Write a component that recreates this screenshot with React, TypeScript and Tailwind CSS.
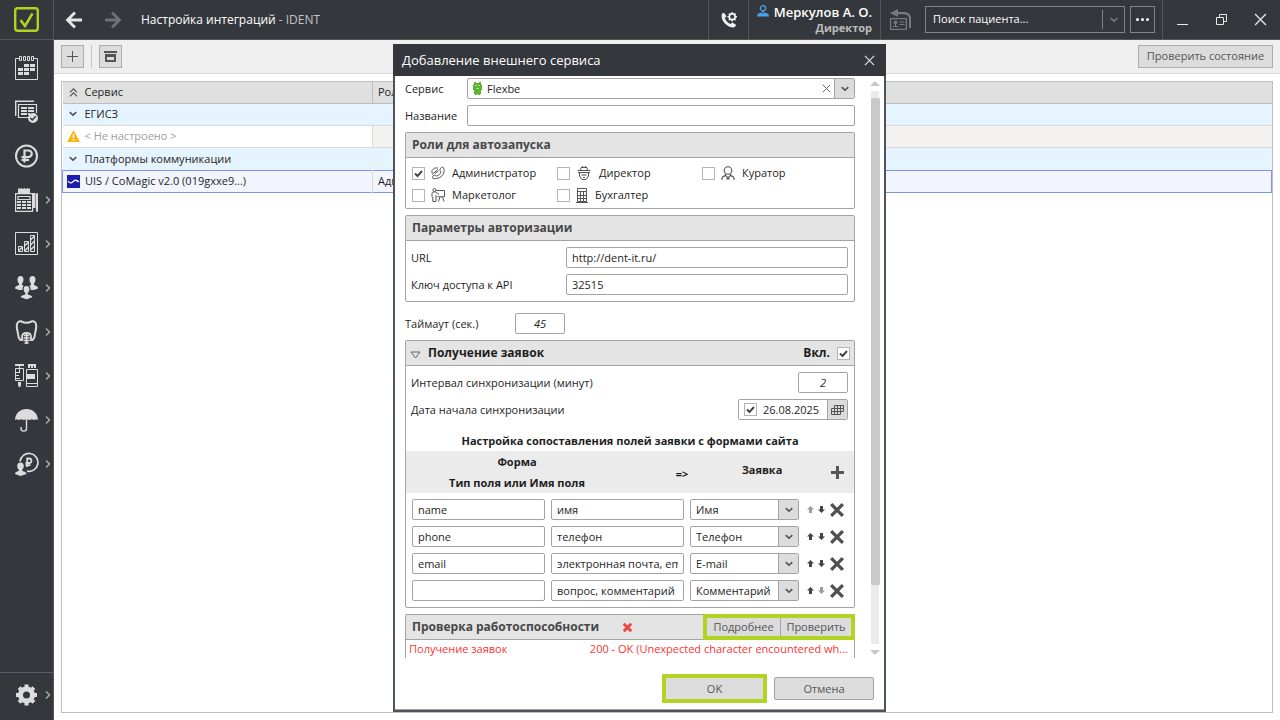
import type { ReactNode } from "react";

type IconProps = { children: ReactNode };

function SideIcon({ children }: IconProps) {
  return (
    <svg viewBox="0 0 24 24" className="size-6 shrink-0" fill="none" stroke="#dcdcdc" strokeWidth="1.2" aria-hidden="true">
      {children}
    </svg>
  );
}

const SIDE_ITEMS: { label: string; more?: boolean; icon: ReactNode }[] = [
  {
    label: "Расписание",
    icon: (
      <SideIcon>
        <path d="M4 2.5H.5v21h22v-21H19" strokeWidth="1" />
        <path d="M4.500.5h2v4h-2zM8.500.5h2v4h-2zM12.500.5h2v4h-2zM16.500.5h2v4h-2z" strokeWidth="1" />
        <path fill="#dcdcdc" stroke="none" d="M9 8h5v3H9zM15 8h5v3h-5zM3 12h5v3H3zM9 12h5v3H9zM15 12h5v3h-5zM3 16h5v3H3zM9 16h5v3H9z" />
      </SideIcon>
    ),
  },
  {
    label: "Задачи",
    icon: (
      <SideIcon>
        <path d="M.7 16V1.200H19" strokeWidth="1.400" />
        <path d="M14 17.500H3.500v-13h18V13" />
        <path d="M6 8h6M13 8h6M6 11h6M13 11h6M6 14h6M13 14h2" strokeWidth="1.800" />
        <circle cx="18" cy="18" r="5" fill="#dcdcdc" stroke="none" />
        <path d="m15.300 18 2 2 3.500-3.800" stroke="#34373c" strokeWidth="1.500" />
      </SideIcon>
    ),
  },
  {
    label: "Платежи",
    icon: (
      <SideIcon>
        <circle cx="11.500" cy="12" r="10.500" strokeWidth="2" />
        <path d="M9.500 18.500v-12h4a3.200 3.200 0 0 1 0 6.500H6.500M6.500 15.800h7.500" strokeWidth="2.200" />
      </SideIcon>
    ),
  },
  {
    label: "Касса",
    more: true,
    icon: (
      <SideIcon>
        <path fill="#dcdcdc" stroke="none" d="M3 5V1l1-1 1 1 1.500-1L8 1l1.500-1 1.500 1 1.500-1L14 1l1-1v5z" />
        <path d="M.6 5.600h17v17.800H.6z" />
        <path d="M3 8.500h12v3H3z" />
        <path fill="#dcdcdc" stroke="none" d="M2 13h4v2H2zM7 13h4v2H7zM12 13h4v2h-4zM2 16h4v2H2zM7 16h4v2H7zM12 16h4v2h-4zM2 19h4v2H2zM7 19h4v2H7zM12 19h4v2h-4zM18 5h2.500v15H18z" />
        <path d="M21.500 5.500h1v17.900h-1z" strokeWidth="1" />
      </SideIcon>
    ),
  },
  {
    label: "Отчёты",
    more: true,
    icon: (
      <SideIcon>
        <path d="M.5.5h22v22H.5z" strokeWidth="1" />
        <path d="M3.500 14.500h4v5h-4zM9.500 9.500h4v10h-4zM15.500 3.500h4v16h-4z" strokeWidth="1" />
        <path d="m3.500 19 4-4M9.500 14l4-4M9.500 19l4-4M15.500 8l4-4M15.500 13l4-4M15.500 18l4-4" strokeWidth="1.500" />
      </SideIcon>
    ),
  },
  {
    label: "Пациенты",
    more: true,
    icon: (
      <SideIcon>
        <g fill="#dcdcdc" stroke="none">
          <path d="M5.500 0c2 0 3 1.500 3 3.500s-1 3.500-1.500 4.100V9l3.500 1.500L7.500 14H4L0 12.500C0 10.500 1 10 4 9V7.600C3.300 7 2.500 5.500 2.500 3.500S3.500 0 5.500 0z" />
          <path d="M17.500 0c2 0 3 1.500 3 3.500s-1 3.500-1.500 4.100V9c3 1 4 1.500 4 3.500L19 14h-3.500l-3-3.500L16 9V7.600c-.7-.6-1.500-2.100-1.500-4.100s1-3.500 3-3.500z" />
          <path stroke="#34373c" d="M11.500 9.500c2.200 0 3.500 1.600 3.500 3.700s-1 3.300-1.700 4V18c3.500 1 4.700 1.800 4.700 3.500L11.500 24 5 21.500c0-1.700 1.200-2.500 4.700-3.500v-.8c-.7-.7-1.700-1.900-1.700-4s1.300-3.700 3.500-3.700z" />
        </g>
      </SideIcon>
    ),
  },
  {
    label: "Лечение",
    more: true,
    icon: (
      <SideIcon>
        <path d="M8 19.500c-2 1.500-4.500 0-4.800-4.500-.3-3-1.700-6-1.400-9.500C2 2 4 .8 6.500 1.500c3 1.600 7 1.600 10 0 2.500-.7 4.500.5 4.700 4 .3 3.500-1.100 6.500-1.400 9.500-.3 4.500-2.800 6-4.800 4.500" strokeWidth="2" />
        <path d="M7 19.500V17c0-2.500 2-4 4.500-4s4.500 1.500 4.500 4v2.500" strokeWidth="1.800" />
        <path d="M11.500 13v11M9 15.500h5M8.500 18h6M8.500 20.500h6M9.500 23h4" strokeWidth="1.600" />
      </SideIcon>
    ),
  },
  {
    label: "Склад",
    more: true,
    icon: (
      <SideIcon>
        <path d="M0 1h9" strokeWidth="2" />
        <path d="M4.500 1v7M.5 4.500h8v12h-8zM1 8.500h4M1 11.500h3M1 14.500h4" strokeWidth="1" />
        <path fill="#dcdcdc" stroke="none" d="M3 18h3v3.500h-.5V23h-2v-1.500H3zM13 0h8v4h-2V2h-1v2h-2V2h-1v2h-2zM12 10h8v5h-8z" />
        <path d="M11.500 5.500h11v17h-11zM12 19.500h10" strokeWidth="1" />
      </SideIcon>
    ),
  },
  {
    label: "Страховые",
    more: true,
    icon: (
      <SideIcon>
        <path fill="#dcdcdc" stroke="none" d="M0 12C.5 5 5 1 11.500 1S22.500 5 23 12l-2-.8-2 .9-2-.9-2.700.9-2.800-.9-2.800.9-2.700-.9-2 .9-2-.9z" />
        <path d="M11.500 11v9.500c0 3.500-5.500 3.500-5.500 0V19" strokeWidth="1.400" />
      </SideIcon>
    ),
  },
  {
    label: "Зарплата",
    more: true,
    icon: (
      <SideIcon>
        <path d="M5 9.500a9 9 0 1 1 7 9.700" strokeWidth="1.700" />
        <path d="M12.200 15V6.500h2.500a2.300 2.300 0 0 1 0 4.500h-4.200M10.500 13.200h5" strokeWidth="1.800" />
        <path fill="#dcdcdc" stroke="none" d="M5.500 10.500c2.200 0 3.300 1.500 3.300 3.500S7.900 17 7.200 17.800v1.200c3 .8 4.300 1.300 4.300 3L5.500 24 0 22c0-1.700 1-2.200 3.800-3v-1.200C3.100 17 2.200 16 2.200 14s1.100-3.500 3.300-3.500z" />
      </SideIcon>
    ),
  },
];

function SideButton({ label, more, children }: { label: string; more?: boolean; children: ReactNode }) {
  return (
    <button type="button" aria-label={label} className="flex h-11 w-full items-center gap-[6px] pl-[15px]">
      {children}
      {more && (
        <svg viewBox="0 0 6 8" className="h-2 w-[6px]" fill="none" stroke="#a8aaad" strokeWidth="1.500" aria-hidden="true">
          <path d="m1 .5 3.500 3.500L1 7.500" />
        </svg>
      )}
    </button>
  );
}

function Cross({ className, width }: { className: string; width: number }) {
  return (
    <svg viewBox="0 0 12 12" className={className} fill="none" stroke="currentColor" strokeWidth={width} aria-hidden="true">
      <path d="m1 1 10 10M11 1 1 11" />
    </svg>
  );
}

function ChevronDown({ className }: { className?: string }) {
  return (
    <svg viewBox="0 0 8 6" className={`h-[6px] w-2 ${className ?? ""}`} fill="none" stroke="currentColor" strokeWidth="1.600" aria-hidden="true">
      <path d="m.7 1.200 3.300 3 3.300-3" />
    </svg>
  );
}

function Check({ id, checked, label }: { id: string; checked?: boolean; label?: string }) {
  return (
    <span className="grid size-[13px] shrink-0">
      <input
        id={id}
        type="checkbox"
        defaultChecked={checked}
        aria-label={label}
        className="peer col-start-1 row-start-1 size-[13px] appearance-none border border-[#b4b4b4] bg-white"
      />
      <svg viewBox="0 0 13 13" className="pointer-events-none invisible col-start-1 row-start-1 size-[13px] peer-checked:visible" fill="none" stroke="#444" strokeWidth="1.900" aria-hidden="true">
        <path d="m3 6.500 2.500 2.500L10 4" />
      </svg>
    </span>
  );
}

const FIELD = "h-[21px] rounded-[2px] border border-[#a3a3a3] bg-white px-[5px] text-[11px] text-[#1e1e1e]";

function Select({ label, value, options }: { label: string; value: string; options: string[] }) {
  return (
    <span className="grid h-[21px] w-[109px] grid-cols-[1fr_20px] overflow-hidden rounded-[2px] border border-[#a3a3a3] bg-white">
      <select aria-label={label} defaultValue={value} className="col-span-2 col-start-1 row-start-1 appearance-none pl-[5px] text-[11px] leading-[19px]">
        {options.map((o) => (
          <option key={o}>{o}</option>
        ))}
      </select>
      <span className="pointer-events-none col-start-2 row-start-1 flex items-center justify-center border-l border-[#a3a3a3] bg-[#dcdcdc] text-[#555]">
        <ChevronDown />
      </span>
    </span>
  );
}

function Panel({ header, children, open }: { header: ReactNode; children: ReactNode; open?: boolean }) {
  return (
    <section className={open ? "rounded-t-[2px] border border-b-0 border-[#a3a3a3]" : "rounded-[2px] border border-[#a3a3a3]"}>
      <header className="flex h-[25px] items-center border-b border-[#a3a3a3] bg-[#e4e4e4] px-[6px] text-xs font-bold text-[#484848]">
        {header}
      </header>
      {children}
    </section>
  );
}

const ROLES: { id: string; name: string; checked?: boolean; icon: ReactNode }[] = [
  {
    id: "admin",
    name: "Администратор",
    checked: true,
    icon: (
      <svg viewBox="0 0 14 14" className="size-[14px]" fill="none" stroke="#555" strokeWidth="1" aria-hidden="true">
        <path d="M9 3.500C9.500 1.500 11 .7 12.300 1.500c1.500 2.500 1 6-1.300 8.300-2.500 2.500-6 3.500-9 2.700-1-1-.5-2.500 1-3.200 1-.4 2 .6 2.600.8 2-.4 4-2.400 4.300-4.200C9.800 5.300 8.800 4.500 9 3.500z" />
        <path d="M1 7V4.500L3.500 2H7M1 8.500 7 3.500M4 7.500 7.500 5" />
      </svg>
    ),
  },
  {
    id: "director",
    name: "Директор",
    icon: (
      <svg viewBox="0 0 16 15" className="h-[15px] w-4" fill="none" stroke="#555" strokeWidth="1" aria-hidden="true">
        <path d="M4.500 4.500 5 1.500h6l.5 3M1.500 4.500h13M2 6.500h12M3.500 6.500V10L6 13.500h4l2.500-3.500V6.500M5.500 9h5M7 11.500h2M6 .500h1M9 .500h1" />
      </svg>
    ),
  },
  {
    id: "curator",
    name: "Куратор",
    icon: (
      <svg viewBox="0 0 14 15" className="h-[15px] w-[14px]" fill="none" stroke="#555" strokeWidth="1.100" aria-hidden="true">
        <circle cx="7" cy="4.500" r="3.800" />
        <path d="M4.500 8 3.800 9.800 1.500 11 .7 14M9.500 8l.7 1.800 2.300 1.200.8 3M4.500 9.500 7 12l2.500-2.500M5.500 13.500 7 12l1.500 1.500" />
      </svg>
    ),
  },
  {
    id: "marketing",
    name: "Маркетолог",
    icon: (
      <svg viewBox="0 0 14 14" className="size-[14px]" fill="none" stroke="#555" strokeWidth="1" aria-hidden="true">
        <circle cx="3.500" cy="2" r="1.500" />
        <path d="M1 9V5.500c0-1 .5-1.500 1.500-1.500h2L8 6.500M1.800 9v4.500H5V7M5 2.500h8.500v6.200H6.500M9 9l-1.500 4.500M11.500 9l1.500 4.500" />
      </svg>
    ),
  },
  {
    id: "accountant",
    name: "Бухгалтер",
    icon: (
      <svg viewBox="0 0 12 15" className="h-[15px] w-3" fill="none" stroke="#555" strokeWidth="1" aria-hidden="true">
        <path d="M1.500.5h9v13h-9zM1.500 3.500h9M1.500 7.500h9M1.500 10.500h9M0 14.500h12M4.500 4v9.500M7.500 4v9.500" />
      </svg>
    ),
  },
];

const MAPPINGS = [
  { type: "name", field: "имя", target: "Имя" },
  { type: "phone", field: "телефон", target: "Телефон" },
  { type: "email", field: "электронная почта, email", target: "E-mail" },
  { type: "", field: "вопрос, комментарий", target: "Комментарий" },
];
const TARGETS = MAPPINGS.map((m) => m.target);

function MoveArrow({ down, disabled }: { down?: boolean; disabled?: boolean }) {
  return (
    <button type="button" disabled={disabled} aria-label={down ? "Ниже" : "Выше"} className="text-[#444] disabled:text-[#9c9c9c]">
      <svg viewBox="0 0 7 7" className={down ? "size-[7px] rotate-180" : "size-[7px]"} fill="currentColor" aria-hidden="true">
        <path d="M3.500 0 7 3.500H5V7H2V3.500H0z" />
      </svg>
    </button>
  );
}

function Header() {
  return (
    <header className="flex h-10 shrink-0 items-stretch border-b border-[#53565c] bg-[#34373c] text-white">
      <div className="flex w-[54px] shrink-0 items-center border-r border-[#53565c] pl-[14px]">
        <svg viewBox="0 0 25 25" className="size-[25px]" fill="none" stroke="#b1d422" aria-hidden="true">
          <rect x="1.200" y="1.200" width="22.600" height="22.600" rx="2.500" strokeWidth="2.400" />
          <path d="m6.500 13 4.500 6L18.500 6.500" strokeWidth="2.600" />
        </svg>
      </div>
      <nav className="flex items-center gap-[21px] pl-[11px]">
        <button type="button" aria-label="Назад">
          <svg viewBox="0 0 18 18" className="size-[18px]" fill="none" stroke="#e6e6e6" strokeWidth="2.800" aria-hidden="true">
            <path d="M17 9H3M10 1.500 2.500 9l7.500 7.500" />
          </svg>
        </button>
        <button type="button" aria-label="Вперёд">
          <svg viewBox="0 0 18 18" className="size-[18px]" fill="none" stroke="#6e727a" strokeWidth="2.800" aria-hidden="true">
            <path d="M1 9h14M8 1.500 15.500 9 8 16.500" />
          </svg>
        </button>
      </nav>
      <h1 className="ml-[19px] flex-1 self-center text-xs whitespace-nowrap">
        Настройка интеграций <span className="text-[#c4c4c4]">- IDENT</span>
      </h1>
      <button type="button" aria-label="Телефония" className="flex w-[41px] items-center justify-center border-x border-[#53565c]">
        <svg viewBox="0 0 16 16" className="size-4" fill="none" stroke="#f0f0f0" aria-hidden="true">
          <path fill="#f0f0f0" stroke="none" d="M1.200 1.500 3 .8l2.500 3.400-1.600 1.900c.5 2.500 3 5 5.600 6l2-1.600 3.500 2.300-.8 2C12 16 8.500 15.500 5 12.500S-.5 5 1.200 1.500z" />
          <circle cx="11.200" cy="4.800" r="2.900" strokeWidth="1.700" />
          <path d="M11.200 0v2M11.200 7.600v2M6.400 4.800h2M14 4.800h2M7.800 1.400l1.300 1.300M13.300 6.900l1.300 1.300M14.600 1.400l-1.300 1.300M7.800 8.200l1.300-1.300" strokeWidth="1.400" />
        </svg>
      </button>
      <div className="flex w-[131px] flex-col items-end pt-[3px] pr-2">
        <div className="flex items-center gap-[5px] text-[13px] leading-[18px] font-semibold">
          <svg viewBox="0 0 12 12" className="mb-[2px] size-3" fill="none" stroke="#4aa0ec" strokeWidth="1.300" aria-hidden="true">
            <circle cx="6" cy="3.300" r="2.600" />
            <path d="M6 6v2" />
            <path fill="#4aa0ec" stroke="none" d="M0 11.500c0-2.500 1.500-3.500 4.500-4L6 9l1.500-1.500c3 .5 4.500 1.500 4.500 4z" />
          </svg>
          Меркулов А. О.
        </div>
        <div className="text-[11px] leading-[14px] font-bold text-[#bdbdbd]">Директор</div>
      </div>
      <div className="flex items-center gap-[5px] border-l border-[#53565c] pr-[7px] pl-[9px]">
        <button type="button" aria-label="Вернуться к карте" className="mr-[9px]">
          <svg viewBox="0 0 21 21" className="size-[21px]" fill="none" stroke="#777a80" strokeWidth="1.200" aria-hidden="true">
            <path fill="#777a80" stroke="none" d="M0 4 8 0v3h6c4 0 7 2.500 7 6v10h-2V10c0-3-2-4.700-5-4.700H8V8z" />
            <path d="M.6 9.600h15.800v10.800H.6zM9.500 13h5M9.500 15.500h5M3 17.500h5M5.500 14v3" />
            <circle cx="5.500" cy="13.300" r="1.300" fill="#777a80" />
          </svg>
        </button>
        <div className="flex h-[27px] w-[200px] items-center border border-[#808387]">
          <input aria-label="Поиск пациента" placeholder="Поиск пациента..." className="min-w-0 flex-1 px-[7px] text-[11px] placeholder:text-white" />
          <button type="button" aria-label="Открыть список" className="flex h-[19px] w-[22px] items-center justify-center border-l border-[#808387] text-[#777a80]">
            <ChevronDown />
          </button>
        </div>
        <button type="button" aria-label="Ещё" className="flex h-[27px] w-[25px] items-center justify-center gap-[2px] border border-[#808387]">
          <span className="size-[3px] rounded-full bg-white" />
          <span className="size-[3px] rounded-full bg-white" />
          <span className="size-[3px] rounded-full bg-white" />
        </button>
      </div>
      <div className="flex border-l border-[#53565c] text-[#e8e8e8]">
        <button type="button" aria-label="Свернуть" className="flex w-[39px] items-center justify-center">
          <span className="mt-[9px] h-px w-[11px] bg-[#e8e8e8]" />
        </button>
        <button type="button" aria-label="Восстановить" className="flex w-[39px] items-center justify-center">
          <svg viewBox="0 0 11 11" className="size-[11px]" fill="none" stroke="currentColor" aria-hidden="true">
            <path d="M.5 3.500h7v7h-7zM3.500 3V.5h7v7H8" />
          </svg>
        </button>
        <button type="button" aria-label="Закрыть" className="flex w-[39px] items-center justify-center">
          <Cross className="size-[13px]" width={1.200} />
        </button>
      </div>
    </header>
  );
}

function ServiceTable() {
  return (
    <div className="mx-[7px] mt-[7px] mb-[7px] flex-1 border border-[#bdbdbd] bg-white">
      <table className="w-full table-fixed border-collapse text-left text-[11px] text-[#1e1e1e]">
        <colgroup>
          <col className="w-[310px]" />
          <col />
        </colgroup>
        <thead>
          <tr className="h-[21px] border-b border-[#bdbdbd] bg-[#e0e0e0] leading-4">
            <th className="border-r border-[#bdbdbd] font-normal">
              <span className="flex items-center gap-[7px] pl-[6px]">
                <svg viewBox="0 0 9 9" className="size-[9px]" fill="none" stroke="#555" strokeWidth="1.200" aria-hidden="true">
                  <path d="m1 4.300 3.500-3.500L8 4.300M1 8.300l3.500-3.500L8 8.300" />
                </svg>
                Сервис
              </span>
            </th>
            <th className="pl-[5px] font-normal">Роли</th>
          </tr>
        </thead>
        <tbody>
          <tr className="h-[22px] border-b border-[#d9d9d9] bg-[#e5f4fe] leading-4">
            <td colSpan={2}>
              <span className="flex items-center gap-2 pl-[6px]">
                <ChevronDown className="text-[#555]" />
                ЕГИСЗ
              </span>
            </td>
          </tr>
          <tr className="h-[22px] border-b border-[#d9d9d9] leading-4 text-[#a0a0a0]">
            <td className="border-r border-[#d9d9d9]">
              <span className="flex items-center gap-[5px] pl-1">
                <svg viewBox="0 0 13 12" className="h-3 w-[13px]" aria-hidden="true">
                  <path fill="#fdb515" d="M6.500 0 13 12H0z" />
                  <path fill="#fff" d="M5.800 4h1.400v4H5.800zM5.800 9h1.400v1.500H5.800z" />
                </svg>
                &lt; Не настроено &gt;
              </span>
            </td>
            <td className="bg-[#f3f2f1]" />
          </tr>
          <tr className="h-[23px] bg-[#e5f4fe] leading-4">
            <td colSpan={2}>
              <span className="flex items-center gap-2 pl-[6px]">
                <ChevronDown className="text-[#555]" />
                Платформы коммуникации
              </span>
            </td>
          </tr>
          <tr className="h-[22px] border border-[#8095f0] bg-[#f2f5fe] leading-4">
            <td className="border-r border-[#d9d9d9]">
              <span className="flex items-center gap-[5px] pl-1">
                <svg viewBox="0 0 13 13" className="size-[13px]" aria-hidden="true">
                  <path fill="#1a1db0" d="M0 0h13v13H0z" />
                  <path d="M1 6c1.500 2.500 3.500 2.500 5 .7S9.500 4.500 12 7" fill="none" stroke="#fff" strokeWidth="1.300" />
                </svg>
                UIS / CoMagic v2.0 (019gxxe9...)
              </span>
            </td>
            <td className="pl-[5px]">Адм.</td>
          </tr>
        </tbody>
      </table>
    </div>
  );
}

function ScrollBar() {
  return (
    <div className="flex w-[10px] shrink-0 flex-col items-center pt-[5px] pb-[3px]" aria-hidden="true">
      <svg viewBox="0 0 10 5" className="h-[5px] w-[10px] shrink-0">
        <path fill="#c8c8c8" d="M0 5h10L5 0z" />
      </svg>
      <div className="mt-[5px] mb-[6px] flex w-full flex-1 flex-col items-center">
        <div className="h-[7px] w-2 bg-[#ebebeb]" />
        <div className="w-[9px] flex-[487] rounded-[1px] bg-[#c9c9c9]" />
        <div className="w-2 flex-[59] bg-[#ebebeb]" />
      </div>
      <svg viewBox="0 0 10 5" className="h-[5px] w-[10px] shrink-0">
        <path fill="#c8c8c8" d="M0 0h10L5 5z" />
      </svg>
    </div>
  );
}

function ServiceDialog() {
  return (
    <div className="fixed inset-0 flex justify-center pt-11 pr-px pb-2">
      <form role="dialog" aria-label="Добавление внешнего сервиса" className="flex w-[493px] flex-col border-2 border-t-0 border-[#4f545c] bg-white text-[11px] leading-4 text-[#1e1e1e]">
        <header className="-mx-[2px] flex h-8 shrink-0 items-center justify-between bg-[#34373c] pr-[11px] pl-[9px] text-white">
          <h2 className="text-[13px]">Добавление внешнего сервиса</h2>
          <button type="button" aria-label="Закрыть окно" className="text-[#dcdcdc]">
            <Cross className="size-[11px]" width={1.400} />
          </button>
        </header>

        <div className="flex min-h-0 flex-1 pr-1 pl-[10px]">
          <div className="flex min-w-0 flex-1 flex-col gap-[6px] overflow-y-auto pt-[2px] pr-[15px] [scrollbar-width:none]">
            <div className="flex items-center">
              <label htmlFor="service" className="w-[62px]">Сервис</label>
              <span className="flex h-[21px] flex-1 items-center overflow-hidden rounded-[2px] border border-[#a3a3a3]">
                <svg viewBox="0 0 9 13" className="mr-[5px] ml-[5px] h-[13px] w-[9px]" fill="#5cb531" aria-hidden="true">
                  <path d="M1 0h2v1h3V0h2v2l1 1v5H8v4H7v1H5v-1H4v1H2v-1H1V8H0V3l1-1z" />
                  <path fill="#a5dc8b" d="M2 3h2v1H2zM5 3h2v1H5zM3 6h3v1H3z" />
                </svg>
                <select id="service" defaultValue="Flexbe" className="min-w-0 flex-1 appearance-none text-[11px] leading-[19px]">
                  <option>Flexbe</option>
                </select>
                <button type="button" aria-label="Очистить" className="mr-[3px] text-[#666]">
                  <Cross className="size-[9px]" width={1.300} />
                </button>
                <span className="flex h-full w-[20px] items-center justify-center border-l border-[#a3a3a3] bg-[#dcdcdc] text-[#555]">
                  <ChevronDown />
                </span>
              </span>
            </div>
            <div className="flex items-center">
              <label htmlFor="title" className="w-[62px]">Название</label>
              <input id="title" className={`${FIELD} flex-1`} />
            </div>

            <Panel header="Роли для автозапуска">
              <div className="grid grid-cols-[145px_145px_1fr] px-[6px] pt-1 pb-[2px]">
                {ROLES.map((r) => (
                  <div key={r.id} className="flex h-[22px] items-center gap-[6px]">
                    <Check id={r.id} checked={r.checked} />
                    <label htmlFor={r.id} className="flex items-center gap-[7px]">
                      {r.icon}
                      {r.name}
                    </label>
                  </div>
                ))}
              </div>
            </Panel>

            <Panel header="Параметры авторизации">
              <div className="grid grid-cols-[155px_1fr] items-center gap-y-[6px] py-[6px] pr-[6px] pl-[5px]">
                <label htmlFor="url">URL</label>
                <input id="url" defaultValue="http://dent-it.ru/" className={FIELD} />
                <label htmlFor="apiKey">Ключ доступа к API</label>
                <input id="apiKey" defaultValue="32515" className={FIELD} />
              </div>
            </Panel>

            <div className="mt-[5px] flex items-center">
              <label htmlFor="timeout" className="w-[110px]">Таймаут (сек.)</label>
              <input id="timeout" defaultValue="45" className={`${FIELD} w-[50px] text-center italic`} />
            </div>

            <Panel
              header={
                <>
                  <svg viewBox="0 0 11 8" className="mt-1 mr-[7px] -ml-[2px] h-2 w-[11px]" fill="none" stroke="#666" aria-hidden="true">
                    <path d="M1 1h9L5.500 7z" />
                  </svg>
                  <span className="flex-1 text-[#1e1e1e]">Получение заявок</span>
                  <label htmlFor="enabled" className="mr-[7px] text-[#1e1e1e]">Вкл.</label>
                  <span className="-mr-[2px]">
                    <Check id="enabled" checked />
                  </span>
                </>
              }
            >
              <div className="flex flex-col gap-[6px] py-[6px] pr-[6px] pl-[5px]">
                <div className="flex items-center justify-between">
                  <label htmlFor="interval">Интервал синхронизации (минут)</label>
                  <input id="interval" defaultValue="2" className={`${FIELD} w-[50px] text-center italic`} />
                </div>
                <div className="flex items-center justify-between">
                  <label htmlFor="startDate">Дата начала синхронизации</label>
                  <span className="flex h-[21px] w-[110px] items-center overflow-hidden rounded-[2px] border border-[#a3a3a3] pl-[5px]">
                    <Check id="useDate" checked label="Использовать дату" />
                    <input id="startDate" defaultValue="26.08.2025" className="min-w-0 flex-1 pl-[6px] text-[11px]" />
                    <button type="button" aria-label="Календарь" className="flex h-full w-5 items-center justify-center border-l border-[#a3a3a3] bg-[#dcdcdc]">
                      <svg viewBox="0 0 13 10" className="h-[10px] w-[13px]" fill="none" stroke="#555" aria-hidden="true">
                        <path d="M3.500.5h9v6h-3v3h-9v-6h12M.5 6.500h9M3.500.5v9M6.500.5v9M9.500.5v6" />
                      </svg>
                    </button>
                  </span>
                </div>
              </div>
              <h3 className="pt-[7px] pb-[2px] text-center font-bold">Настройка сопоставления полей заявки с формами сайта</h3>
              <div className="flex h-[42px] items-center bg-[#ebebeb] pr-[10px] font-bold">
                <div className="w-[222px] text-center leading-[21px]">
                  Форма
                  <br />
                  Тип поля или Имя поля
                </div>
                <div className="w-[108px] pt-1 text-center">=&gt;</div>
                <div className="w-[52px] pb-1 text-center">Заявка</div>
                <button type="button" aria-label="Добавить поле" className="ml-auto">
                  <svg viewBox="0 0 13 13" className="size-[13px]" fill="#555" aria-hidden="true">
                    <path d="M5 0h3v5h5v3H8v5H5V8H0V5h5z" />
                  </svg>
                </button>
              </div>
              <div className="flex flex-col gap-[6px] p-[6px] pr-[10px]">
                {MAPPINGS.map((m, i) => (
                  <div key={m.target} className="flex items-center">
                    <input aria-label="Тип поля" defaultValue={m.type} className={`${FIELD} mr-[6px] min-w-0 flex-1`} />
                    <input aria-label="Имя поля" defaultValue={m.field} className={`${FIELD} mr-[6px] min-w-0 flex-1`} />
                    <Select label="Поле заявки" value={m.target} options={TARGETS} />
                    <span className="mr-[5px] ml-2 flex items-center gap-1">
                      <MoveArrow disabled={i === 0} />
                      <MoveArrow down disabled={i === MAPPINGS.length - 1} />
                    </span>
                    <button type="button" aria-label="Удалить" className="text-[#505050]">
                      <Cross className="size-[14px]" width={2.800} />
                    </button>
                  </div>
                ))}
              </div>
            </Panel>

            <Panel
              open
              header={
                <>
                  Проверка работоспособности
                  <span className="ml-[24px] text-[#ee4444]">
                    <Cross className="size-[9px]" width={3.800} />
                  </span>
                  <span className="-mr-[7px] ml-auto flex h-[26px] w-[152px] border-4 border-[#b1d422] text-[11px]">
                    <button type="button" className="w-[74px] border-r border-[#a3a3a3] bg-[#dcdcdc] font-normal text-[#555]">Подробнее</button>
                    <button type="button" className="flex-1 bg-[#dcdcdc] font-normal text-[#555]">Проверить</button>
                  </span>
                </>
              }
            >
              <div className="flex justify-between pt-[1px] pr-[6px] pb-2 pl-[3px] text-[#fb3434]">
                <span>Получение заявок</span>
                <span>200 - OK (Unexpected character encountered wh...</span>
              </div>
            </Panel>
          </div>
          <ScrollBar />
        </div>

        <footer className="mt-4 flex shrink-0 items-center justify-end gap-[7px] border-b border-[#a3a3a3] pr-[10px] pb-[6px]">
          <button type="submit" className="h-[29px] w-[105px] rounded-[1px] border-4 border-[#b1d422] bg-[#dcdcdc] text-[#555]">OK</button>
          <button type="button" className="h-[23px] w-[100px] rounded-[2px] border border-[#a3a3a3] bg-[#dcdcdc] text-[#555]">Отмена</button>
        </footer>
      </form>
    </div>
  );
}

export default function App() {
  return (
    <div className="flex min-h-screen flex-col bg-white font-['Open_Sans','Noto_Sans',sans-serif]">
      <Header />
      <div className="flex flex-1">
        <aside className="flex w-[54px] shrink-0 flex-col justify-between border-r border-[#53565c] bg-[#34373c]">
          <nav className="pt-[6px]">
            {SIDE_ITEMS.map((item) => (
              <SideButton key={item.label} label={item.label} more={item.more}>
                {item.icon}
              </SideButton>
            ))}
          </nav>
          <div className="border-t border-[#56606c] pb-[3px]">
            <SideButton label="Настройки" more>
              <svg viewBox="0 0 24 24" className="size-6 shrink-0" fill="none" stroke="#dcdcdc" aria-hidden="true">
                <circle cx="11.500" cy="12" r="6" strokeWidth="5" />
                <path d="M11.500 1.500v4M11.500 18.500v4M1 12h4M18 12h4M4.100 4.600l2.800 2.800M16.100 16.600l2.800 2.800M18.900 4.600l-2.800 2.800M4.100 19.400l2.800-2.800" strokeWidth="4" />
              </svg>
            </SideButton>
          </div>
        </aside>
        <main className="flex min-w-0 flex-1 flex-col">
          <div className="flex h-[34px] shrink-0 items-center border-b border-[#d9d9d9] bg-[#efefef] pr-[7px] pl-[7px]">
            <button type="button" aria-label="Добавить" className="flex size-[23px] items-center justify-center border border-[#acacac] bg-[#dcdcdc]">
              <svg viewBox="0 0 11 11" className="size-[11px]" stroke="#555" aria-hidden="true">
                <path d="M5.500 0v11M0 5.500h11" />
              </svg>
            </button>
            <span className="mx-[7px] h-[23px] w-px bg-[#c4c4c4]" />
            <button type="button" aria-label="Архив" className="flex size-[23px] items-center justify-center border border-[#acacac] bg-[#dcdcdc]">
              <svg viewBox="0 0 13 12" className="h-3 w-[13px]" fill="#555" aria-hidden="true">
                <path fillRule="evenodd" d="M0 0h13v2H0zM1 3h11v8H1zM3 6v3h7V6z" />
              </svg>
            </button>
            <button type="button" className="ml-auto h-[23px] w-[135px] border border-[#acacac] bg-[#dcdcdc] text-[11px] whitespace-nowrap text-[#555]">
              Проверить состояние
            </button>
          </div>
          <ServiceTable />
        </main>
      </div>
      <ServiceDialog />
    </div>
  );
}
